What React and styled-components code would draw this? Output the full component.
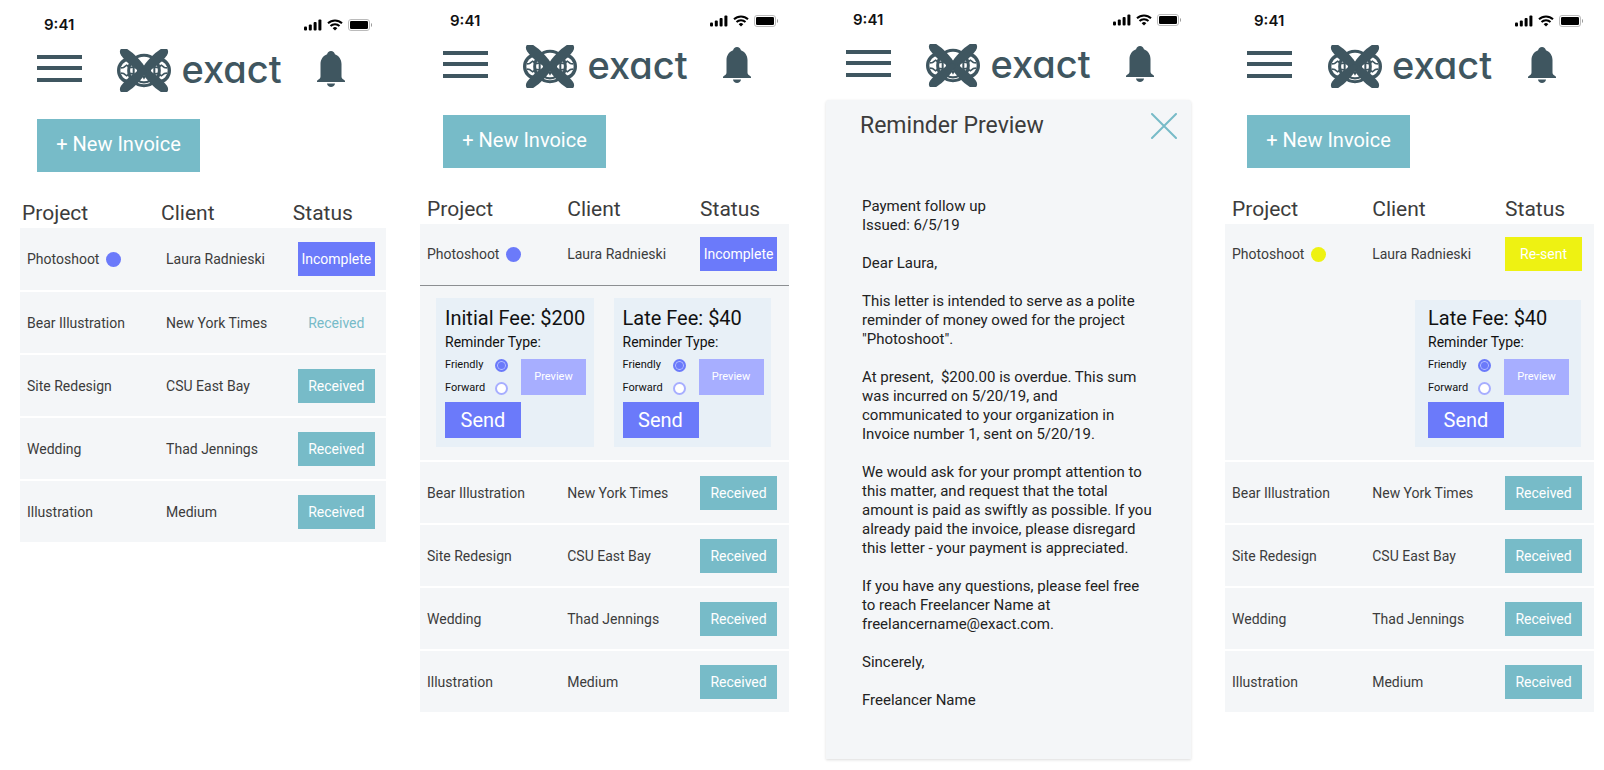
import React from "react";
import styled, { createGlobalStyle } from "styled-components";

const color = {
  slate: "#3f5660",
  teal: "#77bbc8",
  violet: "#6b7afa",
  lilac: "#a7aeff",
  yellow: "#eef212",
  row: "#f4f6f8",
  card: "#e8f0f7",
  text: "#3c3c3c",
};

const GlobalStyle = createGlobalStyle`
  *, *::before, *::after { box-sizing: border-box; }
  body {
    margin: 0;
    background: #fff;
    color: ${color.text};
    font-family: Roboto, "Liberation Sans", sans-serif;
  }
  button, input { margin: 0; font-family: inherit; }
`;

const Board = styled.main`
  display: grid;
  grid-template-columns: 366fr 369fr 368fr 369fr;
  column-gap: 34px;
  align-items: start;
  padding: 0 10px 11px 20px;
`;

const Screen = styled.section`
  min-width: 0;
  padding-top: ${(p) => p.$top}px;
`;

const StatusBar = styled.div`
  display: flex;
  align-items: center;
  justify-content: space-between;
  height: 18px;
  padding: 0 ${(p) => p.$right - 27}px 0 ${(p) => p.$left + 7}px;
  color: #111;
  font: 600 15px/18px Inter, sans-serif;
`;

const Signals = styled.div`
  display: flex;
  align-items: center;
  gap: 5px;
`;

const HeaderBar = styled.header`
  display: flex;
  align-items: center;
  justify-content: space-between;
  height: 43px;
  margin-top: 15px;
  padding: 0 ${(p) => p.$right}px 0 ${(p) => p.$left}px;
`;

const IconButton = styled.button`
  display: block;
  padding: 0;
  border: 0;
  background: none;
  color: ${(p) => p.$color || color.slate};
  cursor: pointer;
  svg { display: block; }
`;

const Brand = styled.a`
  display: flex;
  align-items: center;
  gap: 10px;
  color: ${color.slate};
  text-decoration: none;
`;

const BrandName = styled.span`
  padding-bottom: 2px;
  font-family: Inter, sans-serif;
  font-size: 38px;
  font-weight: 500;
  line-height: 41px;
  font-feature-settings: "cv11";
`;

const NewInvoice = styled.button`
  display: block;
  width: 163px;
  height: 53px;
  margin: 27px 0 0 ${(p) => p.$left}px;
  padding: 0 0 3px;
  border: 0;
  background: ${color.teal};
  color: #fff;
  font-size: 20px;
  cursor: pointer;
`;

const Table = styled.table`
  width: 100%;
  table-layout: fixed;
  border-collapse: collapse;
`;

const Col = styled.col`
  width: ${(p) => p.$width};
`;

const HeadCell = styled.th`
  height: 56px;
  padding: 0 0 2px ${(p) => p.$left}px;
  font-size: 21px;
  font-weight: 400;
  line-height: 26px;
  text-align: left;
  vertical-align: bottom;
`;

const Row = styled.tr`
  background: ${color.row};
`;

const Cell = styled.td`
  height: ${(p) => (p.$open ? 61 : 63)}px;
  padding: 0 0 0 7px;
  border-bottom: ${(p) => (p.$open ? "0" : "2px solid #fff")};
  font-size: 14px;
  line-height: 20px;
  white-space: nowrap;
`;

const Dot = styled.span`
  display: inline-block;
  width: 15px;
  height: 15px;
  margin-left: 7px;
  border-radius: 50%;
  background: ${(p) => p.$color};
  vertical-align: -3px;
`;

const StatusButton = styled.button`
  display: block;
  width: 77px;
  height: 34px;
  padding: 0;
  border: 0;
  background: ${(p) => p.$bg};
  color: ${(p) => p.$fg || "#fff"};
  font-size: 14px;
  cursor: pointer;
`;

const DetailCell = styled.td`
  height: 176px;
  padding: 0;
  border-top: 1px solid ${(p) => (p.$line ? "#8c8f92" : color.row)};
  border-bottom: 2px solid #fff;
  vertical-align: top;
`;

const Fees = styled.div`
  display: flex;
  justify-content: flex-end;
  gap: 20px;
  padding: ${(p) => (p.$single ? "14px 13px 0 16px" : "12px 18px 0 16px")};
`;

const FeeCard = styled.form`
  flex: ${(p) => (p.$single ? "0 0 166px" : "1")};
  min-width: 0;
  height: ${(p) => (p.$single ? 147 : 149)}px;
  padding: ${(p) => (p.$single ? "6px 0 0 13px" : "8px 0 0 9px")};
  background: ${color.card};
  color: #111;
`;

const FeeTitle = styled.h3`
  margin: 0;
  font-size: 20px;
  font-weight: 400;
  line-height: 24px;
  white-space: nowrap;
`;

const Reminder = styled.fieldset`
  min-width: 0;
  margin: 0;
  padding: 0;
  border: 0;
`;

const Legend = styled.legend`
  padding: 0;
  font-size: 14px;
  line-height: 24px;
`;

const Choice = styled.div`
  display: grid;
  grid-template-columns: 76px 65px;
  align-items: center;
  line-height: 16px;
`;

const Option = styled.label`
  display: flex;
  align-items: center;
  justify-content: space-between;
  height: 23px;
  padding-right: 13px;
  font-size: 11px;
`;

const Radio = styled.input`
  appearance: none;
  width: 13px;
  height: 13px;
  border: 2px solid ${color.lilac};
  border-radius: 50%;
  background: #fff;
  &:checked {
    border-color: ${color.violet};
    background: ${color.violet};
    box-shadow: inset 0 0 0 1px #b9c2ff;
  }
`;

const ActionButton = styled.button`
  display: block;
  width: ${(p) => (p.$main ? 76 : 65)}px;
  height: 36px;
  padding: 0;
  border: 0;
  background: ${(p) => (p.$main ? color.violet : color.lilac)};
  color: #fff;
  font-size: ${(p) => (p.$main ? 20 : 11)}px;
  cursor: pointer;
`;

const SendRow = styled.div`
  padding-top: 2px;
`;

const Sheet = styled.article`
  height: 659px;
  margin: 13px 0 0 3px;
  padding: 13px 14px 0 34px;
  border-radius: 3px 3px 0 0;
  background: ${color.row};
  box-shadow: 0 1px 3px rgba(0, 0, 0, 0.14);
`;

const SheetHead = styled.div`
  display: flex;
  align-items: center;
  justify-content: space-between;
  height: 26px;
`;

const SheetTitle = styled.h2`
  margin: 0;
  font-size: 23px;
  font-weight: 400;
  line-height: 26px;
`;

const Letter = styled.div`
  padding: 58px 0 0 2px;
  color: #222;
  font-size: 15px;
  line-height: 19px;
  p {
    margin: 0 0 19px;
    white-space: pre;
  }
`;

const LogoMark = () => (
  <svg width="54" height="43" viewBox="26 26 162 130" preserveAspectRatio="none" fill="none" stroke="currentColor" aria-hidden="true">
    <circle cx="107" cy="91" r="46" strokeWidth="9" />
    <ellipse cx="61" cy="91" rx="30" ry="34" strokeWidth="10" />
    <ellipse cx="153" cy="91" rx="30" ry="34" strokeWidth="10" />
    <path
      d="M38 83l8-1 9-7 9 7 10-1M38 99l8 1 9 7 9-7 10 1M176 83l-8-1-9-7-9 7-10-1M176 99l-8 1-9 7-9-7-10 1"
      strokeWidth="5"
    />
    <path d="M76 68v46M138 68v46" strokeWidth="6" />
    <path d="M89 122q18 10 36 0" strokeWidth="7" />
    <g fill="currentColor" stroke="none">
      <path d="M100 106h14l-7 13z" />
      {[-47, 47, 133, 227].map((a) => (
        <path
          key={a}
          transform={`translate(107 91) rotate(${a})`}
          d="M-7 4C-16-24-18-56-13-82Q-10-94 0-95Q10-94 13-82C18-56 16-24 7 4Z"
        />
      ))}
    </g>
  </svg>
);

const MenuIcon = () => (
  <svg width="45" height="31" viewBox="0 0 45 31" fill="currentColor" aria-hidden="true">
    <path d="M0 0h45v4H0zM0 11h45v4H0zM0 23h45v4H0z" />
  </svg>
);

const BellIcon = () => (
  <svg width="28" height="39" viewBox="0 0 28 39" fill="currentColor" aria-hidden="true">
    <path d="M14 0c2 0 3.600 1.300 3.900 3.200C22 4.800 24.500 8.500 24.500 13v12.500c0 1.800 1.200 2.500 3.500 4.200V31H0v-1.300c2.300-1.700 3.500-2.400 3.500-4.200V13c0-4.500 2.500-8.200 6.600-9.800C10.400 1.300 12 0 14 0z" />
    <path d="M10 32.500h8c-.3 2.200-1.900 3.500-4 3.500S10.300 34.700 10 32.500z" />
  </svg>
);

const CloseIcon = () => (
  <svg width="26" height="26" viewBox="0 0 26 26" stroke="currentColor" strokeWidth="2" strokeLinecap="round" aria-hidden="true">
    <path d="M1 1l24 24M25 1L1 25" />
  </svg>
);

const CellularIcon = () => (
  <svg width="18" height="12" viewBox="0 0 18 12" aria-hidden="true">
    <rect x="0" y="7.500" width="3" height="4" rx="1" />
    <rect x="4.800" y="5.500" width="3" height="6" rx="1" />
    <rect x="9.600" y="3" width="3" height="8.500" rx="1" />
    <rect x="14.400" y="0.500" width="3" height="11" rx="1" />
  </svg>
);

const WifiIcon = () => (
  <svg width="16" height="12" viewBox="0 0 16 12" fill="none" stroke="#000" strokeWidth="2" aria-hidden="true">
    <path d="M1 4.300a10 10 0 0 1 14 0M3.500 7a6.400 6.400 0 0 1 9 0" />
    <path d="M8 11.500L5.700 9.200a3.300 3.300 0 0 1 4.600 0z" fill="#000" stroke="none" />
  </svg>
);

const BatteryIcon = () => (
  <svg width="24" height="12" viewBox="0 0 24 12" aria-hidden="true">
    <rect x="0.500" y="0.500" width="21" height="11" rx="2.500" fill="none" stroke="#bbb" />
    <rect x="2" y="2" width="18" height="8" rx="1.300" />
    <path d="M23 4v4c.6-.3 1-1 1-2s-.4-1.700-1-2z" fill="#999" />
  </svg>
);

function PhoneHeader({ left, right }) {
  return (
    <>
      <StatusBar $left={left} $right={right}>
        <span>9:41</span>
        <Signals>
          <CellularIcon />
          <WifiIcon />
          <BatteryIcon />
        </Signals>
      </StatusBar>
      <HeaderBar $left={left} $right={right}>
        <IconButton type="button" aria-label="Menu">
          <MenuIcon />
        </IconButton>
        <Brand href="#">
          <LogoMark />
          <BrandName>exact</BrandName>
        </Brand>
        <IconButton type="button" aria-label="Notifications">
          <BellIcon />
        </IconButton>
      </HeaderBar>
    </>
  );
}

function Fee({ id, title, single }) {
  return (
    <FeeCard $single={single} onSubmit={(e) => e.preventDefault()}>
      <FeeTitle>{title}</FeeTitle>
      <Reminder>
        <Legend>Reminder Type:</Legend>
        <Choice>
          <div>
            <Option htmlFor={`${id}-friendly`}>
              Friendly
              <Radio type="radio" id={`${id}-friendly`} name={id} defaultChecked />
            </Option>
            <Option htmlFor={`${id}-forward`}>
              Forward
              <Radio type="radio" id={`${id}-forward`} name={id} />
            </Option>
          </div>
          <ActionButton type="button">Preview</ActionButton>
        </Choice>
      </Reminder>
      <SendRow>
        <ActionButton type="submit" $main>
          Send
        </ActionButton>
      </SendRow>
    </FeeCard>
  );
}

const statusStyle = {
  Incomplete: { $bg: color.violet },
  "Re-sent": { $bg: color.yellow },
};

const paidRows = [
  ["Bear Illustration", "New York Times"],
  ["Site Redesign", "CSU East Bay"],
  ["Wedding", "Thad Jennings"],
  ["Illustration", "Medium"],
];

function InvoiceTable({ status, headLeft, fees, line, plainRow }) {
  const current = statusStyle[status];
  return (
    <Table>
      <colgroup>
        <Col $width="38%" />
        <Col $width="36%" />
        <Col $width="26%" />
      </colgroup>
      <thead>
        <tr>
          {["Project", "Client", "Status"].map((name) => (
            <HeadCell key={name} scope="col" $left={headLeft}>
              {name}
            </HeadCell>
          ))}
        </tr>
      </thead>
      <tbody>
        <Row>
          <Cell $open={!!fees}>
            Photoshoot
            <Dot $color={current.$bg} />
          </Cell>
          <Cell $open={!!fees}>Laura Radnieski</Cell>
          <Cell $open={!!fees}>
            <StatusButton type="button" {...current}>
              {status}
            </StatusButton>
          </Cell>
        </Row>
        {fees && (
          <Row>
            <DetailCell colSpan={3} $line={line}>
              <Fees $single={fees.length === 1}>
                {fees.map((fee) => (
                  <Fee key={fee.id} {...fee} single={fees.length === 1} />
                ))}
              </Fees>
            </DetailCell>
          </Row>
        )}
        {paidRows.map(([project, client]) => (
          <Row key={project}>
            <Cell>{project}</Cell>
            <Cell>{client}</Cell>
            <Cell>
              <StatusButton
                type="button"
                $bg={project === plainRow ? "transparent" : color.teal}
                $fg={project === plainRow ? color.teal : "#fff"}
              >
                Received
              </StatusButton>
            </Cell>
          </Row>
        ))}
      </tbody>
    </Table>
  );
}

const letter = [
  "Payment follow up\nIssued: 6/5/19",
  "Dear Laura,",
  'This letter is intended to serve as a polite\nreminder of money owed for the project\n"Photoshoot".',
  "At present,  $200.00 is overdue. This sum\nwas incurred on 5/20/19, and\ncommunicated to your organization in\nInvoice number 1, sent on 5/20/19.",
  "We would ask for your prompt attention to\nthis matter, and request that the total\namount is paid as swiftly as possible. If you\nalready paid the invoice, please disregard\nthis letter - your payment is appreciated.",
  "If you have any questions, please feel free\nto reach Freelancer Name at\nfreelancername@exact.com.",
  "Sincerely,",
  "Freelancer Name",
];

function InvoiceScreen({ top, left, right, ...table }) {
  return (
    <Screen $top={top}>
      <PhoneHeader left={left} right={right} />
      <NewInvoice type="button" $left={left}>
        + New Invoice
      </NewInvoice>
      <InvoiceTable {...table} />
    </Screen>
  );
}

export default function App() {
  return (
    <>
      <GlobalStyle />
      <Board>
        <InvoiceScreen top={16} left={17} right={41} headLeft={2} status="Incomplete" plainRow="Bear Illustration" />
        <InvoiceScreen
          top={12}
          left={23}
          right={38}
          headLeft={7}
          status="Incomplete"
          line
          fees={[
            { id: "initial-fee", title: "Initial Fee: $200" },
            { id: "late-fee", title: "Late Fee: $40" },
          ]}
        />
        <Screen $top={11}>
          <PhoneHeader left={23} right={37} />
          <Sheet>
            <SheetHead>
              <SheetTitle>Reminder Preview</SheetTitle>
              <IconButton type="button" aria-label="Close" $color={color.teal}>
                <CloseIcon />
              </IconButton>
            </SheetHead>
            <Letter>
              {letter.map((text) => (
                <p key={text}>{text}</p>
              ))}
            </Letter>
          </Sheet>
        </Screen>
        <InvoiceScreen
          top={12}
          left={22}
          right={38}
          headLeft={7}
          status="Re-sent"
          fees={[{ id: "resent-late-fee", title: "Late Fee: $40" }]}
        />
      </Board>
    </>
  );
}
